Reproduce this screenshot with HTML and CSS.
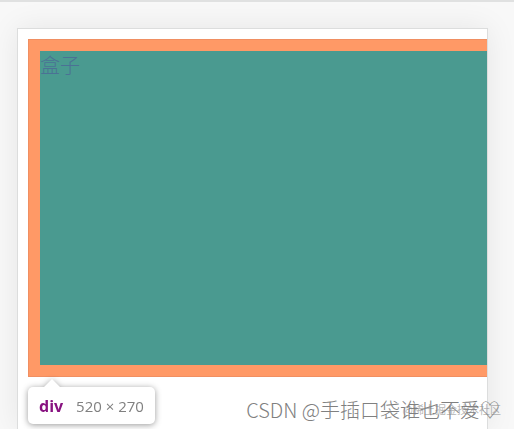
FILE: index.html
```html
<!DOCTYPE html>
<html lang="zh-CN">
<head>
<meta charset="utf-8">
<title>盒子</title>
<link rel="stylesheet" href="styles.css">
</head>
<body>
<main class="viewport">
  <div class="box">盒子</div>
  <div class="tooltip"><strong class="tag">div</strong><span>520 × 270</span></div>
</main>
<div class="credit">CSDN @手插口袋谁也不爱♡</div>
<div class="community">@稀土掘金技术社区</div>
</body>
</html>
```

FILE: styles.css
```css
* {
  box-sizing: border-box;
}

body {
  margin: 0;
  min-height: 100vh;
  padding: 26px 26px 0 17px;
  border-top: 2px solid #e0e1e1;
  background: #f8f8f8;
  font-family: "Open Sans", "Noto Sans CJK SC", sans-serif;
  display: flex;
  overflow: hidden;
}

.viewport {
  flex: 1;
  min-width: 0;
  padding: 10px 0 0 10px;
  border: 1px solid #dcdddd;
  border-bottom: 0;
  background: #fff;
  box-shadow: 0 0 28px rgba(0, 0, 0, 0.08);
  overflow: hidden;
}

.box {
  width: 120%;
  height: 338px;
  border: 12px solid #ff9966;
  outline: 1px solid #f08f62;
  outline-offset: -1px;
  background: #4a9a90;
  color: #4b7195;
  font-family: "Noto Sans CJK SC", sans-serif;
  font-size: 20px;
  font-weight: 300;
  line-height: 28px;
}

.tooltip {
  position: relative;
  display: flex;
  align-items: center;
  gap: 13px;
  width: max-content;
  height: 37px;
  margin-top: 10px;
  padding: 0 11px;
  border-radius: 5px;
  background: #fff;
  filter: drop-shadow(0 1px 3px rgba(0, 0, 0, 0.4));
  color: #808080;
  font-size: 15px;
}

.tooltip::before {
  content: "";
  position: absolute;
  left: 15px;
  top: -8px;
  border: 9px solid transparent;
  border-top: 0;
  border-bottom: 9px solid #fff;
}

.tag {
  color: #881280;
  font-size: 16px;
}

.credit,
.community {
  position: absolute;
  white-space: nowrap;
  font-family: "Noto Sans CJK SC", sans-serif;
}

.credit {
  right: 14px;
  bottom: 5px;
  color: #808080;
  font-size: 20px;
  font-weight: 300;
  line-height: 28px;
}

.community {
  right: 13px;
  bottom: 10px;
  color: rgba(130, 130, 130, 0.6);
  font-size: 11px;
  line-height: 20px;
}
```
